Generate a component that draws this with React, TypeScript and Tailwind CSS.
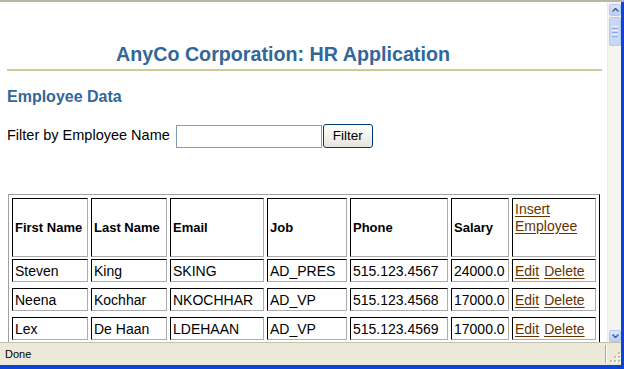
import React from 'react'

const employees = [
    ['Steven', 'King', 'SKING', 'AD_PRES', '515.123.4567', '24000.0'],
    ['Neena', 'Kochhar', 'NKOCHHAR', 'AD_VP', '515.123.4568', '17000.0'],
    ['Lex', 'De Haan', 'LDEHAAN', 'AD_VP', '515.123.4569', '17000.0'],
]

const headers = ['First Name', 'Last Name', 'Email', 'Job', 'Phone', 'Salary']

const cols = 'grid grid-cols-[76px_76px_94px_80px_98px_58px_84px] gap-x-[3px]'
const cell = 'border border-t-black border-l-black border-r-[#acacac] border-b-[#acacac] pl-[2px] flex items-center whitespace-nowrap overflow-hidden'
const link = 'text-[#663300] underline underline-offset-[2px]'

function Arrow({ up }: { up?: boolean }) {
    return (
        <div className="w-[12px] h-[12px] rounded-[2px] border border-[#b5c8f3] bg-gradient-to-b from-[#dce6fd] to-[#b9cdf9] flex items-center justify-center">
            <svg width="7" height="4" viewBox="0 0 7 4">
                <path d={up ? 'M0.5 3.5 L3.5 0.5 L6.5 3.5' : 'M0.5 0.5 L3.5 3.5 L6.5 0.5'} stroke="#4d6185" strokeWidth="1.5" fill="none" />
            </svg>
        </div>
    )
}

function Scrollbar() {
    return (
        <div className="w-[14px] h-full bg-[#f5f4ee] border-l border-[#ecebe4] pl-[1px] pt-[2px] flex flex-col">
            <Arrow up />
            <div className="mt-[1px] w-[12px] h-[29px] rounded-[2px] border border-[#b5c8f3] bg-[#c8d7fc] flex flex-col items-center justify-center gap-[1px]">
                <div className="w-[6px] h-[1px] bg-[#eef3ff]" />
                <div className="w-[6px] h-[1px] bg-[#8caaf0]" />
                <div className="w-[6px] h-[1px] bg-[#eef3ff]" />
                <div className="w-[6px] h-[1px] bg-[#8caaf0]" />
                <div className="w-[6px] h-[1px] bg-[#eef3ff]" />
                <div className="w-[6px] h-[1px] bg-[#8caaf0]" />
            </div>
            <div className="flex-1" />
            <Arrow />
        </div>
    )
}

export default function App() {
    return (
        <div className="w-[624px] h-[369px] flex flex-col bg-[#0b45d8] font-['Liberation_Sans',Arial,sans-serif] overflow-hidden">
            <div className="h-[2px] bg-[#b9b6aa]" />
            <div className="flex">
                <div className="w-[621px] flex flex-col">
                    <div className="flex h-[340px]">
                        <div className="w-[607px] h-full bg-white overflow-hidden">
                            <h1 className="pt-[41px] pl-[116px] text-[19.7px] leading-[22px] font-bold text-[#336699]">
                                AnyCo Corporation: HR Application
                            </h1>
                            <div className="mt-[4px] ml-[7px] w-[595px] h-[2px] bg-[#cccc99]" />
                            <h3 className="mt-[17px] pl-[7px] text-[16px] leading-[18px] font-bold text-[#336699]">
                                Employee Data
                            </h3>
                            <div className="mt-[18px] h-[24px] flex items-center pl-[7px] text-[14.5px] text-black">
                                <span>Filter by Employee Name</span>
                                <input type="text" className="ml-[6px] mt-[1px] w-[146px] h-[23px] border border-[#7f9db9] bg-white outline-none" />
                                <button className="ml-[1px] w-[50px] h-[24px] rounded-[3px] border border-[#003c74] bg-gradient-to-b from-white to-[#e6e5dc] text-[13.5px] text-black leading-none">
                                    Filter
                                </button>
                            </div>
                            <div className="mt-[46px] ml-[8px] w-[592px] border border-t-[#a0a0a0] border-l-[#a0a0a0] border-r-black border-b-black px-[3px] pt-[3px] pb-[3px]">
                                <div className={`${cols} h-[59px]`}>
                                    {headers.map(h => (
                                        <div key={h} className={`${cell} text-[13px] font-bold text-black`}>{h}</div>
                                    ))}
                                    <div className="border border-t-black border-l-black border-r-[#acacac] border-b-[#acacac] pl-[2px] pt-[2px] text-[14px] leading-[17px]">
                                        <a href="#" className={link}>Insert</a>
                                        <br />
                                        <a href="#" className={link}>Employee</a>
                                    </div>
                                </div>
                                {employees.map((row, i) => (
                                    <div key={row[2]} className={`${cols} h-[23px] ${i === 0 ? 'mt-[2px]' : 'mt-[6px]'}`}>
                                        {row.map((v, j) => (
                                            <div key={j} className={`${cell} text-[14px] leading-[16px] text-black`}>{v}</div>
                                        ))}
                                        <div className={`${cell} text-[14px] leading-[16px] gap-[5px]`}>
                                            <a href="#" className={link}>Edit</a>
                                            <a href="#" className={link}>Delete</a>
                                        </div>
                                    </div>
                                ))}
                            </div>
                        </div>
                        <Scrollbar />
                    </div>
                    <div className="h-[23px] bg-[#ece9d8] border-t border-[#c5c2b2] flex items-center">
                        <span className="pl-[5px] text-[11px] text-black flex-1">Done</span>
                        <div className="w-[2px] h-[18px] border-l border-[#aca899] bg-white mr-[2px]" />
                        <svg width="12" height="18" viewBox="0 0 12 18" className="self-end">
                            {[[9, 5], [9, 9], [5, 9], [9, 13], [5, 13], [1, 13]].map(([x, y]) => (
                                <g key={`${x}-${y}`}>
                                    <rect x={x + 1} y={y + 1} width="2" height="2" fill="#ffffff" />
                                    <rect x={x} y={y} width="2" height="2" fill="#c0bcae" />
                                </g>
                            ))}
                        </svg>
                    </div>
                </div>
            </div>
        </div>
    )
}
